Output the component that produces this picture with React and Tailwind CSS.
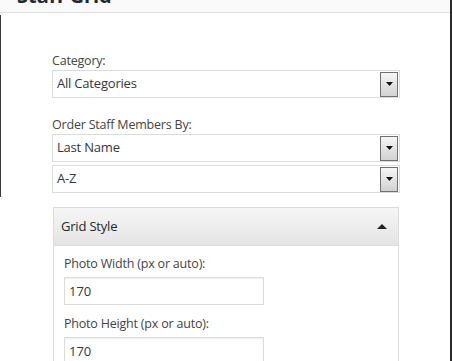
import { useState } from 'react'

const font = { fontFamily: '"Open Sans", "Noto Sans", sans-serif' }

function SelectBox({ value }) {
  return (
    <div className="flex h-[28px] items-center border border-[#dcdcdc] bg-white pl-[4px] pr-[1px]">
      <span className="flex-1 text-[13px] tracking-[-0.2px] text-[#32373c]">{value}</span>
      <div className="flex h-[25px] w-[18px] justify-center border border-[#6f6f6f] bg-linear-to-b from-[#f6f6f6] to-[#d2d2d2] pt-[9px]">
        <svg width="7" height="4" viewBox="0 0 7 4">
          <path d="M0 0h7L3.5 4z" fill="#111" />
        </svg>
      </div>
    </div>
  )
}

function TextField({ label, value, first }) {
  return (
    <div className={first ? '' : 'mt-[10px]'}>
      <div className="mb-[4px] text-[12.5px] leading-[18px] tracking-[-0.2px] text-[#444]">{label}</div>
      <input
        type="text"
        defaultValue={value}
        className="h-[28px] w-[200px] border border-[#dcdcdc] bg-white px-[4px] text-[13px] text-[#32373c] shadow-[inset_0_1px_2px_rgba(0,0,0,0.07)] outline-none"
      />
    </div>
  )
}

export default function App() {
  const [open] = useState(true)

  return (
    <div className="h-[361px] w-[452px] overflow-hidden bg-white" style={font}>
      <div className="flex h-full flex-col border-r-2 border-[#2b2b2b]">
        {/* Dialog title bar, mostly scrolled away */}
        <div className="h-[13px] shrink-0 overflow-hidden border-b border-[#dddddd] bg-[#fafafa] pl-[17px]">
          <div className="mt-[-16px] text-[20px] leading-[24px] font-bold text-[#23282d]">Staff Grid</div>
        </div>

        <div className="flex flex-1">
          <div className="mt-[2px] h-[182px] w-[1px] shrink-0 bg-[#3a3a3a]" />

          <div className="flex-1 pt-[38px] pl-[51px] pr-[50px]">
            <div className="text-[12.5px] leading-[19px] tracking-[-0.2px] text-[#444]">Category:</div>
            <SelectBox value="All Categories" />

            <div className="mt-[18px] text-[12.5px] leading-[18px] tracking-[-0.2px] text-[#444]">Order Staff Members By:</div>
            <SelectBox value="Last Name" />
            <div className="mt-[3px]">
              <SelectBox value="A-Z" />
            </div>

            {/* Grid Style accordion panel */}
            <div className="mt-[14px] ml-[1px] mr-[1px] border border-[#dcdcdc]">
              <div className="flex h-[38px] items-center justify-between border-b border-[#dcdcdc] bg-linear-to-b from-[#f6f6f6] to-[#e4e4e4] pl-[7px] pr-[11px]">
                <span className="pt-[1px] text-[13px] tracking-[-0.2px] text-[#23282d]">Grid Style</span>
                <svg width="10" height="5" viewBox="0 0 10 5">
                  <path d="M5 0L10 5H0z" fill="#222" />
                </svg>
              </div>
              {open && (
                <div className="px-[10px] pt-[9px] pb-[10px]">
                  <TextField label="Photo Width (px or auto):" value="170" first />
                  <TextField label="Photo Height (px or auto):" value="170" />
                </div>
              )}
            </div>
          </div>
        </div>
      </div>
    </div>
  )
}
